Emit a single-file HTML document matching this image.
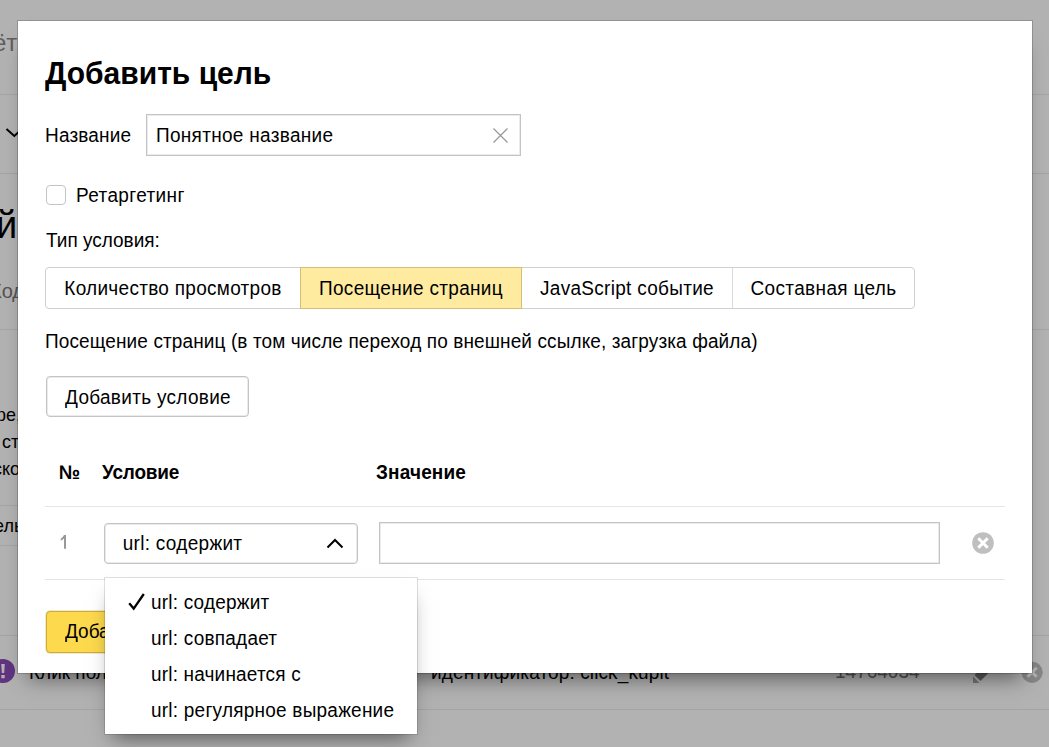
<!DOCTYPE html>
<html><head><meta charset="utf-8">
<style>
html,body{margin:0;padding:0}
body{width:1049px;height:747px;overflow:hidden;position:relative;background:#fff;font-family:"Liberation Sans",sans-serif;color:#000}
.a{position:absolute}
.t{position:absolute;font-size:19px;line-height:21px;white-space:nowrap;transform:scaleY(1.03);transform-origin:0 17px}
.b{font-weight:bold}
#ov{position:absolute;left:0;top:0;width:1049px;height:747px;background:rgba(0,0,0,.3)}
#modal{position:absolute;left:18px;top:21px;width:1014px;height:652px;background:#fff;box-shadow:0 0 0 1px rgba(0,0,0,.18),0 15px 20px -10px rgba(0,0,0,.5)}
#m{position:absolute;left:-18px;top:-21px;width:1049px;height:747px}
.ln{position:absolute;height:1px;background:#e5e5e5}
</style></head>
<body>
<!-- background page -->
<div class="a" style="left:0;top:94px;width:1049px;height:1px;background:#ebebeb"></div>
<div class="a" style="left:0;top:173px;width:1049px;height:1px;background:#ebebeb"></div>
<div class="a" style="left:0;top:329px;width:1049px;height:1px;background:#ebebeb"></div>
<div class="a" style="left:0;top:505px;width:900px;height:1px;background:#ebebeb"></div>
<div class="a" style="left:0;top:545px;width:900px;height:1px;background:#ebebeb"></div>
<div class="a" style="left:0;top:635px;width:1049px;height:1px;background:#ebebeb"></div>
<div class="a" style="left:0;top:709px;width:1049px;height:1px;background:#ebebeb"></div>
<div class="t" style="left:-7px;top:29px;font-size:24px;line-height:28px;color:#888">ёт</div>
<svg class="a" style="left:0;top:120px" width="30" height="30" viewBox="0 0 30 30"><path d="M6.5 9L14.3 16L22 9" fill="none" stroke="#000" stroke-width="2"/></svg>
<div class="t" style="left:-4px;top:202px;font-size:38px;line-height:44px">й</div>
<div class="t" style="left:-10px;top:280px;font-size:20px;line-height:22px;color:#777">Код</div>
<div class="t" style="left:-4px;top:405px;font-size:18px;line-height:20px">ре,</div>
<div class="t" style="left:2px;top:432px;font-size:18px;line-height:20px">ст</div>
<div class="t" style="left:-7px;top:459px;font-size:18px;line-height:20px">ско</div>
<div class="t" style="left:-6px;top:516px;font-size:18px;line-height:20px">ель</div>
<svg class="a" style="left:-9px;top:659px" width="24" height="24" viewBox="0 0 24 24"><circle cx="12" cy="12" r="12" fill="#8a4bb8"/><path d="M10.2 5h3.6l-.6 9h-2.4z M10.3 16h3.4v3.2h-3.4z" fill="#fff"/></svg>
<div class="t" style="left:29px;top:662px">Клик пользователя</div>
<div class="t" style="left:431px;top:662px;letter-spacing:.12px">идентификатор: click_kupit</div>
<div class="t" style="left:835px;top:661px;color:#777">14764034</div>
<svg class="a" style="left:960px;top:640px" width="50" height="50" viewBox="0 0 50 50"><path d="M13 43V36.5L19.5 43z" fill="#aaa"/><path d="M14.5 35L20.5 41L40.5 21L34.5 15z" fill="#858585"/></svg>
<svg class="a" style="left:1012px;top:652px" width="40" height="40" viewBox="0 0 40 40"><circle cx="20.1" cy="20.3" r="10.6" fill="#c0c0c0"/><path d="M15.6 15.8L24.6 24.8M24.6 15.8L15.6 24.8" stroke="#fff" stroke-width="3"/></svg>
<div id="ov"></div>

<div id="modal"><div id="m">
  <div class="t b" style="left:45px;top:57px;font-size:30px;line-height:34px;transform:scaleY(1.03);transform-origin:0 27px">Добавить цель</div>
  <div class="t" style="left:45px;top:125px;letter-spacing:.17px">Название</div>
  <div class="a" style="left:146px;top:114px;width:373px;height:40px;border:1px solid #c4c4c4;box-shadow:inset 0 0 0 1px #ebebeb"></div>
  <div class="t" style="left:156px;top:125px;letter-spacing:.3px">Понятное название</div>
  <svg class="a" style="left:492px;top:127px" width="17" height="17" viewBox="0 0 17 17"><path d="M1.5 1.5L15.5 15.5M15.5 1.5L1.5 15.5" stroke="#999" stroke-width="1.3"/></svg>

  <div class="a" style="left:46px;top:185px;width:18px;height:18px;border:1px solid #c4c4c4;border-radius:4px"></div>
  <div class="t" style="left:76px;top:185px;letter-spacing:.38px">Ретаргетинг</div>

  <div class="t" style="left:46px;top:230px">Тип условия:</div>

  <div class="a" style="left:45px;top:267px;width:868px;height:40px;border:1px solid #d0d0d0;border-radius:4px"></div>
  <div class="a" style="left:300px;top:267px;width:220px;height:40px;border:1px solid #d5bf76;background:#ffeba0"></div>
  <div class="a" style="left:732px;top:268px;width:1px;height:40px;background:#d9d9d9"></div>
  <div class="t" style="left:64.3px;top:278px;letter-spacing:.285px">Количество просмотров</div>
  <div class="t" style="left:319px;top:278px;letter-spacing:.32px">Посещение страниц</div>
  <div class="t" style="left:540px;top:278px;letter-spacing:.29px">JavaScript событие</div>
  <div class="t" style="left:750.5px;top:278px;letter-spacing:.35px">Составная цель</div>

  <div class="t" style="left:45px;top:331px;letter-spacing:.115px">Посещение страниц (в том числе переход по внешней ссылке, загрузка файла)</div>

  <div class="a" style="left:46px;top:376px;width:201px;height:39px;border:1px solid #c4c4c4;border-radius:4px;box-shadow:inset 0 0 0 1px #ebebeb"></div>
  <div class="t" style="left:65px;top:387px;letter-spacing:.3px">Добавить условие</div>

  <div class="t b" style="left:59px;top:462px">№</div>
  <div class="t b" style="left:102px;top:462px;letter-spacing:-.2px">Условие</div>
  <div class="t b" style="left:376px;top:462px;letter-spacing:.16px">Значение</div>
  <div class="ln" style="left:45px;top:506px;width:960px"></div>
  <div class="ln" style="left:45px;top:579px;width:960px"></div>
  <svg class="a" style="left:55px;top:530px" width="20" height="25" viewBox="0 0 20 25"><path d="M9 5H11V18.7H9V8.6Q7.6 9.9 5.7 10.7V8.7Q8 7.4 9 5Z" fill="#999"/></svg>
  <div class="a" style="left:104px;top:523px;width:252px;height:39px;border:1px solid #c4c4c4;border-radius:4px;box-shadow:inset 0 0 0 1px #ebebeb"></div>
  <div class="t" style="left:122.7px;top:533px;letter-spacing:.3px">url: содержит</div>
  <svg class="a" style="left:325px;top:536px" width="20" height="14" viewBox="0 0 20 14"><path d="M2.5 11.5L10 4L17.5 11.5" fill="none" stroke="#000" stroke-width="2"/></svg>
  <div class="a" style="left:379px;top:522px;width:559px;height:40px;border:1px solid #c4c4c4;box-shadow:inset 0 0 0 1px #ebebeb"></div>
  <svg class="a" style="left:972px;top:532px" width="22" height="22" viewBox="0 0 22 22"><circle cx="11" cy="11" r="10.8" fill="#bfbfbf"/><path d="M6.3 6.3L15.7 15.7M15.7 6.3L6.3 15.7" stroke="#fff" stroke-width="3"/></svg>

  <div class="a" style="left:46px;top:611px;width:200px;height:40px;border:1px solid #cdac38;border-radius:4px;background:#fdd94e;box-shadow:0 0 0 .5px rgba(201,169,53,.5)"></div>
  <div class="t" style="left:65px;top:621px">Добавить цель</div>
</div></div>

<!-- popup -->
<div class="a" style="left:105px;top:578px;width:312px;height:156px;background:#fff;box-shadow:0 0 0 1px rgba(0,0,0,.12),0 12px 20px -8px rgba(0,0,0,.5)">
</div>
<svg class="a" style="left:126px;top:591px" width="22" height="22" viewBox="0 0 22 22"><path d="M3.2 12.3L7.7 17.6L17.8 3" fill="none" stroke="#000" stroke-width="2.3"/></svg>
<div class="t" style="left:151px;top:592px;letter-spacing:.2px">url: содержит</div>
<div class="t" style="left:151px;top:628px;letter-spacing:.22px">url: совпадает</div>
<div class="t" style="left:151px;top:664px;letter-spacing:.175px">url: начинается с</div>
<div class="t" style="left:151px;top:700px;letter-spacing:.23px">url: регулярное выражение</div>
</body></html>
